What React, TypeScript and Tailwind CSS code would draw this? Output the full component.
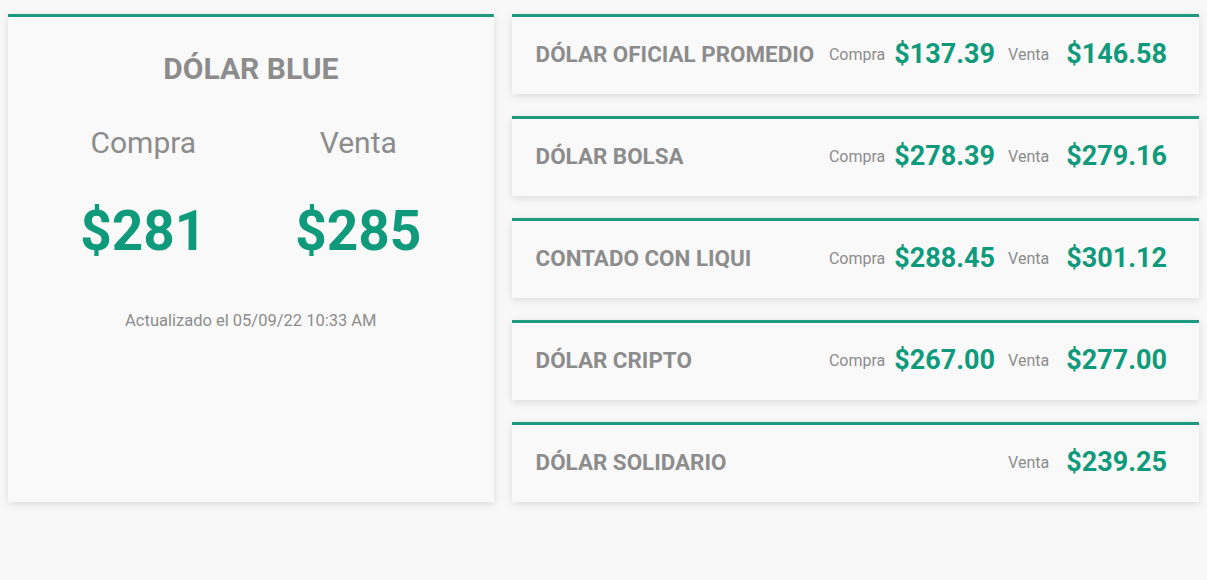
const ROWS = [
  { name: "DÓLAR OFICIAL PROMEDIO", compra: "$137.39", venta: "$146.58" },
  { name: "DÓLAR BOLSA", compra: "$278.39", venta: "$279.16" },
  { name: "CONTADO CON LIQUI", compra: "$288.45", venta: "$301.12" },
  { name: "DÓLAR CRIPTO", compra: "$267.00", venta: "$277.00" },
  { name: "DÓLAR SOLIDARIO", compra: null, venta: "$239.25" },
];

export default function App() {
  return (
    <div
      className="min-h-[580px] bg-[#f8f8f8] px-2 py-[14px] flex gap-[18px] items-start"
      style={{ fontFamily: "Roboto, 'Noto Sans', sans-serif" }}
    >
      {/* Blue card */}
      <div className="w-[486px] h-[488px] bg-[#f9f9f9] border-t-[3px] border-[#1d9a80] shadow-[0_2px_8px_rgba(0,0,0,0.12)] flex flex-col items-center">
        <h1 className="mt-[32px] text-[30px] leading-[40px] font-bold text-[#8c8c8c]">DÓLAR BLUE</h1>
        <div className="mt-[34px] flex">
          <div className="w-[215px] flex flex-col items-center">
            <p className="text-[30px] leading-[40px] text-[#8c8c8c]">Compra</p>
            <p className="mt-[33px] text-[55px] leading-[70px] font-bold text-[#0e9a7b]">$281</p>
          </div>
          <div className="w-[215px] flex flex-col items-center">
            <p className="text-[30px] leading-[40px] text-[#8c8c8c]">Venta</p>
            <p className="mt-[33px] text-[55px] leading-[70px] font-bold text-[#0e9a7b]">$285</p>
          </div>
        </div>
        <p className="mt-[43px] text-[16.5px] text-[#8c8c8c]">Actualizado el 05/09/22 10:33 AM</p>
      </div>

      {/* Other quotes */}
      <div className="w-[688px] flex flex-col gap-[22px]">
        {ROWS.map((r) => (
          <div
            key={r.name}
            className="h-[80px] bg-[#f9f9f9] border-t-[3px] border-[#1d9a80] shadow-[0_2px_8px_rgba(0,0,0,0.12)] flex items-center pl-6 pr-[32px] pb-[2px]"
          >
            <span className="text-[22.4px] font-bold text-[#8c8c8c] whitespace-nowrap">{r.name}</span>
            <div className="ml-auto flex items-center">
              {r.compra && (
                <>
                  <span className="text-[16px] text-[#8c8c8c]">Compra</span>
                  <span className="ml-[9px] text-[27px] font-bold text-[#0e9a7b]">{r.compra}</span>
                </>
              )}
              <span className="ml-[13px] text-[16px] text-[#8c8c8c]">Venta</span>
              <span className="ml-[17px] text-[27px] font-bold text-[#0e9a7b]">{r.venta}</span>
            </div>
          </div>
        ))}
      </div>
    </div>
  );
}
